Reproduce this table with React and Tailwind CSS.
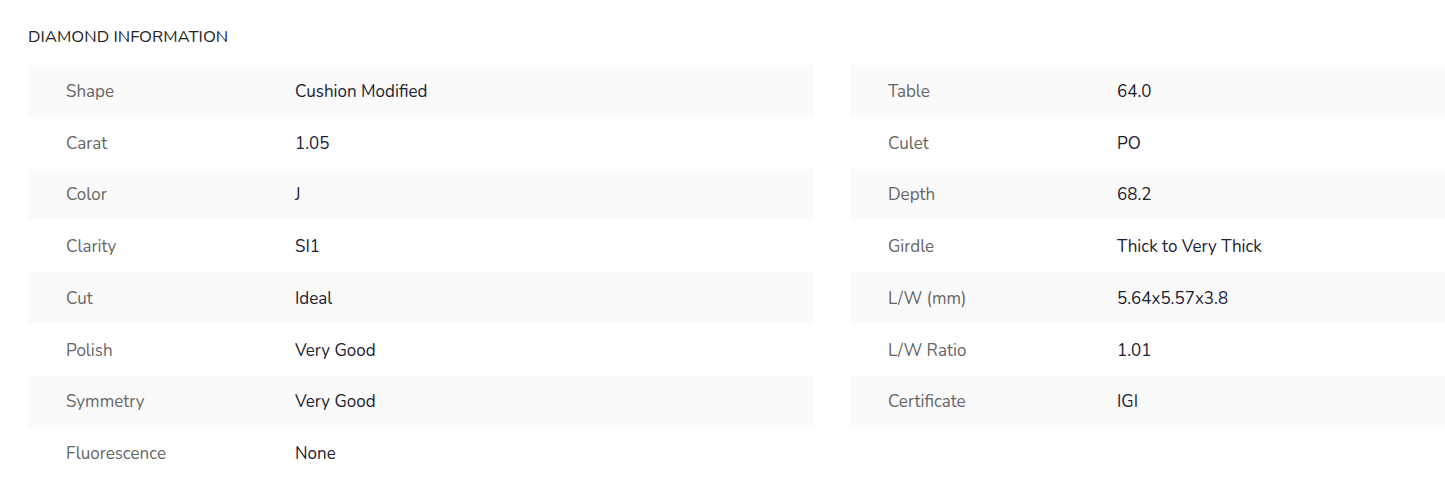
const left = [
  ["Shape", "Cushion Modified"],
  ["Carat", "1.05"],
  ["Color", "J"],
  ["Clarity", "SI1"],
  ["Cut", "Ideal"],
  ["Polish", "Very Good"],
  ["Symmetry", "Very Good"],
  ["Fluorescence", "None"],
];

const right = [
  ["Table", "64.0"],
  ["Culet", "PO"],
  ["Depth", "68.2"],
  ["Girdle", "Thick to Very Thick"],
  ["L/W (mm)", "5.64x5.57x3.8"],
  ["L/W Ratio", "1.01"],
  ["Certificate", "IGI"],
];

function SpecTable({ rows, className }) {
  return (
    <div className={className}>
      {rows.map(([label, value], i) => (
        <div
          key={label}
          className={`flex h-[51.75px] items-center pt-[1px] ${i % 2 === 0 ? "bg-[#fafafa]" : "bg-white"}`}
        >
          <span className="w-[267px] flex-shrink-0 pl-[38px] text-[#666666]">{label}</span>
          <span className="text-[#1c2130]">{value}</span>
        </div>
      ))}
    </div>
  );
}

export default function App() {
  return (
    <section
      className="h-[493px] overflow-hidden bg-white pl-[28px] pt-[25px] text-[17px] leading-[23px]"
      style={{ fontFamily: '"Nunito", "Noto Sans", "Open Sans", sans-serif' }}
    >
      <h3 className="text-[16.8px] font-normal uppercase text-[#222222]">
        Diamond Information
      </h3>
      <div className="mt-[17px] flex gap-[36px]">
        <SpecTable rows={left} className="w-[786px] flex-shrink-0" />
        <SpecTable rows={right} className="flex-1" />
      </div>
    </section>
  );
}
